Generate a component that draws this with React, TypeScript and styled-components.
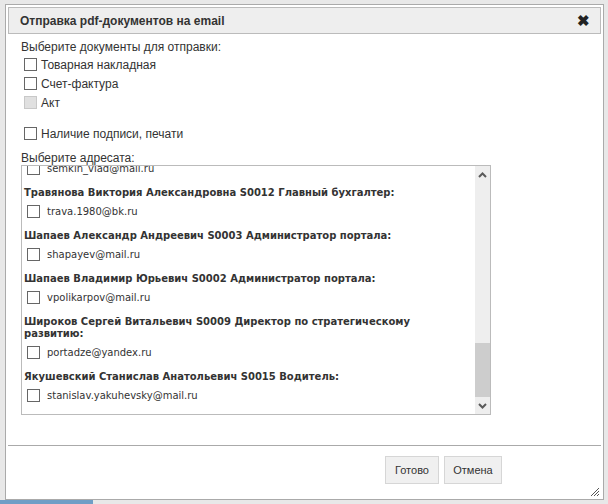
import React from "react";
import styled, { createGlobalStyle } from "styled-components";

const Global = createGlobalStyle`
  html, body { margin: 0; padding: 0; background: #e8e8e8; }
  body { font-family: "Liberation Sans", Arial, sans-serif; color: #333; }
`;

const Page = styled.div`
  width: 608px;
  height: 504px;
  overflow: hidden;
  display: flex;
  flex-direction: column;
  background: #e8e8e8;
`;

const Dialog = styled.div`
  margin: 4px 0 0 5px;
  width: 599px;
  height: 496px;
  box-sizing: border-box;
  border: 1px solid #aaa;
  background: #fff;
  padding: 2px;
  display: flex;
  flex-direction: column;
  position: relative;
`;

const TitleBar = styled.div`
  height: 27px;
  box-sizing: border-box;
  border: 1px solid #bbb;
  background: #eeeeee;
  display: flex;
  align-items: center;
  justify-content: space-between;
  padding: 0 10px 0 11px;
  font-weight: bold;
  font-size: 12px;
  color: #333;
`;

const CloseX = styled.span`
  font-size: 15px;
  color: #222;
  line-height: 1;
`;

const Body = styled.div`
  flex: 1;
  padding: 5px 0 0 13px;
  font-size: 12px;
`;

const Label = styled.div<{ $gapTop?: number; $h?: number }>`
  line-height: ${(p) => p.$h ?? 16}px;
  height: ${(p) => p.$h ?? 16}px;
  margin-top: ${(p) => p.$gapTop ?? 0}px;
`;

const CheckRow = styled.label<{ $gapTop?: number }>`
  display: flex;
  align-items: center;
  height: 19px;
  padding-left: 3px;
  margin-top: ${(p) => p.$gapTop ?? 0}px;
`;

const Box = styled.span<{ $disabled?: boolean }>`
  width: 13px;
  height: 13px;
  box-sizing: border-box;
  border: 1px solid ${(p) => (p.$disabled ? "#c8c8c8" : "#666")};
  background: ${(p) => (p.$disabled ? "#e0e0e0" : "#fff")};
  flex: none;
  margin-right: 4px;
`;

const ListBox = styled.div`
  width: 470px;
  height: 250px;
  box-sizing: border-box;
  border: 1px solid #bbb;
  display: flex;
`;

const ListContent = styled.div`
  flex: 1;
  overflow: hidden;
  font-family: "DejaVu Sans", Verdana, sans-serif;
  font-size: 10px;
`;

const ListInner = styled.div`
  margin-top: -10px;
  padding: 0 14px 0 2px;
`;

const Group = styled.div`
  margin-bottom: 8px;
`;

const GroupHeader = styled.div`
  font-weight: bold;
  line-height: 12px;
  color: #333;
`;

const EmailRow = styled.div`
  display: flex;
  align-items: center;
  height: 22px;
  margin-top: 1px;
  padding-left: 3px;
  color: #333;
`;

const EmailBox = styled(Box)`
  margin-right: 7px;
`;

const Scrollbar = styled.div`
  width: 15px;
  background: #eeeeee;
  display: flex;
  flex-direction: column;
`;

const ArrowBtn = styled.div`
  height: 17px;
  display: flex;
  align-items: center;
  justify-content: center;
`;

const Track = styled.div`
  flex: 1;
  display: flex;
  flex-direction: column;
  justify-content: flex-end;
`;

const Thumb = styled.div`
  height: 54px;
  background: #cdcdcd;
`;

const Separator = styled.div`
  height: 1px;
  background: #aaa;
`;

const ButtonPane = styled.div`
  height: 51px;
  display: flex;
  justify-content: flex-end;
  align-items: flex-start;
  padding: 10px 99px 0 0;
  gap: 5px;
  box-sizing: border-box;
`;

const Button = styled.button<{ $w: number }>`
  width: ${(p) => p.$w}px;
  height: 28px;
  box-sizing: border-box;
  border: 1px solid #d6d6d6;
  background: #f0f0f0;
  color: #333;
  font-family: "Liberation Sans", Arial, sans-serif;
  font-size: 11px;
  padding: 0;
`;

const Grip = styled.svg`
  position: absolute;
  right: 3px;
  bottom: 2px;
`;

const BottomStrip = styled.div`
  flex: 1;
  display: flex;
`;

const BlueBar = styled.div`
  width: 93px;
  background: #6f9ec6;
`;

const Chevron = ({ up }: { up?: boolean }) => (
  <svg width="9" height="6" viewBox="0 0 9 6">
    <path
      d={up ? "M1 5 L4.5 1.5 L8 5" : "M1 1 L4.5 4.5 L8 1"}
      fill="none"
      stroke="#5a5a5a"
      strokeWidth="2"
    />
  </svg>
);

const groups: { name?: string; email: string }[] = [
  { email: "semkin_vlad@mail.ru" },
  { name: "Травянова Виктория Александровна S0012 Главный бухгалтер:", email: "trava.1980@bk.ru" },
  { name: "Шапаев Александр Андреевич S0003 Администратор портала:", email: "shapayev@mail.ru" },
  { name: "Шапаев Владимир Юрьевич S0002 Администратор портала:", email: "vpolikarpov@mail.ru" },
  { name: "Широков Сергей Витальевич S0009 Директор по стратегическому развитию:", email: "portadze@yandex.ru" },
  { name: "Якушевский Станислав Анатольевич S0015 Водитель:", email: "stanislav.yakuhevsky@mail.ru" },
];

export default function App() {
  return (
    <Page>
      <Global />
      <Dialog>
        <TitleBar>
          <span>Отправка pdf-документов на email</span>
          <CloseX>✖</CloseX>
        </TitleBar>
        <Body>
          <Label>Выберите документы для отправки:</Label>
          <CheckRow><Box />Товарная накладная</CheckRow>
          <CheckRow><Box />Счет-фактура</CheckRow>
          <CheckRow><Box $disabled />Акт</CheckRow>
          <CheckRow $gapTop={12}><Box />Наличие подписи, печати</CheckRow>
          <Label $gapTop={8} $h={14}>Выберите адресата:</Label>
          <ListBox>
            <ListContent>
              <ListInner>
                {groups.map((g) => (
                  <Group key={g.email}>
                    {g.name && <GroupHeader>{g.name}</GroupHeader>}
                    <EmailRow>
                      <EmailBox />
                      {g.email}
                    </EmailRow>
                  </Group>
                ))}
              </ListInner>
            </ListContent>
            <Scrollbar>
              <ArrowBtn><Chevron up /></ArrowBtn>
              <Track><Thumb /></Track>
              <ArrowBtn><Chevron /></ArrowBtn>
            </Scrollbar>
          </ListBox>
        </Body>
        <Separator />
        <ButtonPane>
          <Button $w={54}>Готово</Button>
          <Button $w={58}>Отмена</Button>
        </ButtonPane>
        <Grip width="10" height="10" viewBox="0 0 10 10">
          <path d="M9 1 L1 9 M9 4 L4 9 M9 7 L7 9" stroke="#555" strokeWidth="1" />
        </Grip>
      </Dialog>
      <BottomStrip>
        <BlueBar />
      </BottomStrip>
    </Page>
  );
}
